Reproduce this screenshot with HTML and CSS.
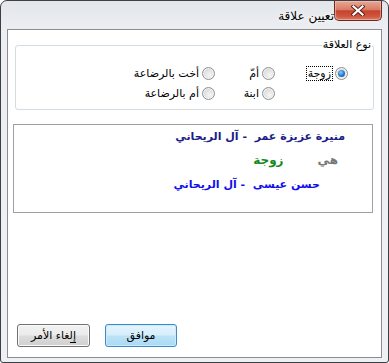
FILE: index.html
```html
<!DOCTYPE html>
<html lang="ar">
<head>
<meta charset="utf-8">
<title>تعيين علاقة</title>
<link rel="stylesheet" href="styles.css">
</head>
<body>
<div class="window">
  <div class="titlebar">
    <div class="close">
      <svg width="14" height="11" viewBox="0 0 14 11">
        <path d="M2.5 1.5 L11.5 9.5 M11.5 1.5 L2.5 9.5" stroke="#5b1d14" stroke-width="4" stroke-linecap="square" fill="none"/>
        <path d="M2.5 1.5 L11.5 9.5 M11.5 1.5 L2.5 9.5" stroke="#ffffff" stroke-width="2.2" stroke-linecap="square" fill="none"/>
      </svg>
    </div>
    <div class="title">تعيين علاقة</div>
  </div>
  <div class="client" dir="rtl">
    <div class="group">
      <span class="legend">نوع العلاقة</span>
      <div class="radios">
        <div class="opt r1 c1"><span class="radio checked"></span><span class="lbl focus">زوجة</span></div>
        <div class="opt r1 c2"><span class="radio"></span><span class="lbl">أمّ</span></div>
        <div class="opt r1 c3"><span class="radio"></span><span class="lbl">أخت بالرضاعة</span></div>
        <div class="opt r2 c2"><span class="radio"></span><span class="lbl">ابنة</span></div>
        <div class="opt r2 c3"><span class="radio"></span><span class="lbl">أم بالرضاعة</span></div>
      </div>
    </div>
    <div class="info">
      <div class="l1">منيرة عزيزة عمر&nbsp; - آل الريحاني</div>
      <div class="l2"><span class="hi">هي</span><span class="rel">زوجة</span></div>
      <div class="l3">حسن عيسى&nbsp; - آل الريحاني</div>
    </div>
    <div class="buttons">
      <button class="btn ok">موافق</button>
      <button class="btn cancel"><u>إل</u>غاء الأمر</button>
    </div>
  </div>
</div>
</body>
</html>
```
FILE: styles.css
```css
* { box-sizing: border-box; }
html, body { margin: 0; padding: 0; }
body {
  width: 389px;
  height: 363px;
  overflow: hidden;
  background: #ffffff;
  font-family: "DejaVu Sans", sans-serif;
  font-size: 11px;
}
.window {
  width: 389px;
  height: 363px;
  border: 1px solid #3c3f44;
  border-radius: 7px 7px 3px 3px;
  background: linear-gradient(#e2e5ea, #eceef2 28px, #eef0f3);
  padding: 0 6px 4px 6px;
  display: flex;
  flex-direction: column;
}
.titlebar {
  height: 28px;
  display: flex;
  direction: rtl;
  align-items: flex-start;
}
.close {
  width: 48px;
  height: 20px;
  border: 1px solid #6a2a20;
  border-top: none;
  border-radius: 0 0 5px 5px;
  background: linear-gradient(#e7a898 0%, #da7b66 45%, #c7432c 52%, #cd5540 80%, #dd7d64 100%);
  box-shadow: inset 0 0 0 1px rgba(255,210,200,0.45);
  display: flex;
  align-items: center;
  justify-content: center;
}
.title {
  padding-top: 8px;
  font-size: 12px;
  line-height: 14px;
  color: #000;
  text-shadow: 0 0 4px #ffffff, 0 0 6px #ffffff;
}
.client {
  flex: 1;
  border: 1px solid #8a8d92;
  background: #ffffff;
  display: flex;
  flex-direction: column;
}
.group {
  position: relative;
  margin: 15px 7px 0 7px;
  border: 1px solid #d3dce3;
  border-radius: 3px;
  padding: 21px 25px 9px 0;
}
.legend {
  position: absolute;
  top: -8px;
  right: 1px;
  padding: 0 1px;
  background: #ffffff;
  line-height: 14px;
  color: #000;
}
.radios {
  display: grid;
  grid-template-columns: 73px 60px auto;
  grid-template-rows: 13px 13px;
  row-gap: 7px;
}
.r1 { grid-row: 1; }
.r2 { grid-row: 2; }
.c1 { grid-column: 1; }
.c2 { grid-column: 2; }
.c3 { grid-column: 3; }
.opt {
  display: flex;
  align-items: center;
  gap: 3px;
  height: 13px;
  white-space: nowrap;
}
.radio {
  width: 13px;
  height: 13px;
  flex: none;
  border-radius: 50%;
  border: 1px solid #8f9193;
  background: radial-gradient(circle at 60% 65%, #f6f6f6 0%, #e4e4e4 45%, #c9c9c9 100%);
  box-shadow: inset 0 0 0 1px #f4f4f4;
  display: flex;
  align-items: center;
  justify-content: center;
}
.radio.checked::after {
  content: "";
  width: 7px;
  height: 7px;
  border-radius: 50%;
  background: radial-gradient(circle at 40% 35%, #8fd0ff 0%, #2f86d6 45%, #0b3f7c 100%);
}
.lbl {
  line-height: 13px;
  color: #000;
}
.lbl.focus {
  outline: 1px dotted #000;
  outline-offset: 0;
  padding: 0 1px;
}
.info {
  margin: 14px 8px 0 5px;
  height: 89px;
  border: 1px solid #a0a0a0;
  background: #ffffff;
  font-weight: bold;
  font-size: 11px;
}
.l1 {
  margin-top: 3px;
  height: 18px;
  line-height: 18px;
  padding-right: 27px;
  color: #1c1c86;
}
.l2 {
  height: 28px;
  line-height: 28px;
  padding-right: 34px;
  display: flex;
  gap: 34px;
  font-size: 12px;
}
.hi { color: #777777; }
.rel { color: #14891a; }
.l3 {
  height: 22px;
  line-height: 22px;
  padding-right: 52px;
  color: #1010ee;
  font-size: 11px;
}
.buttons {
  margin-top: auto;
  padding: 0 0 10px 9px;
  display: flex;
  justify-content: flex-end;
  gap: 15px;
}
.btn {
  height: 23px;
  border-radius: 3px;
  font-family: "DejaVu Sans", sans-serif;
  font-size: 11px;
  color: #000;
  padding: 0;
}
.ok {
  width: 72px;
  border: 1px solid #3c8bc8;
  background: linear-gradient(#e5f4fc 0%, #d6eefb 48%, #bce3f8 52%, #a9d9f4 100%);
  box-shadow: inset 0 0 0 1px #c9ecfc;
}
.cancel {
  width: 73px;
  border: 1px solid #707070;
  background: linear-gradient(#f2f2f2 0%, #ebebeb 48%, #dddddd 52%, #cfcfcf 100%);
  box-shadow: inset 0 0 0 1px #fbfbfb;
}
.cancel u { text-decoration: none; border-bottom: 1px solid #000; }
```
